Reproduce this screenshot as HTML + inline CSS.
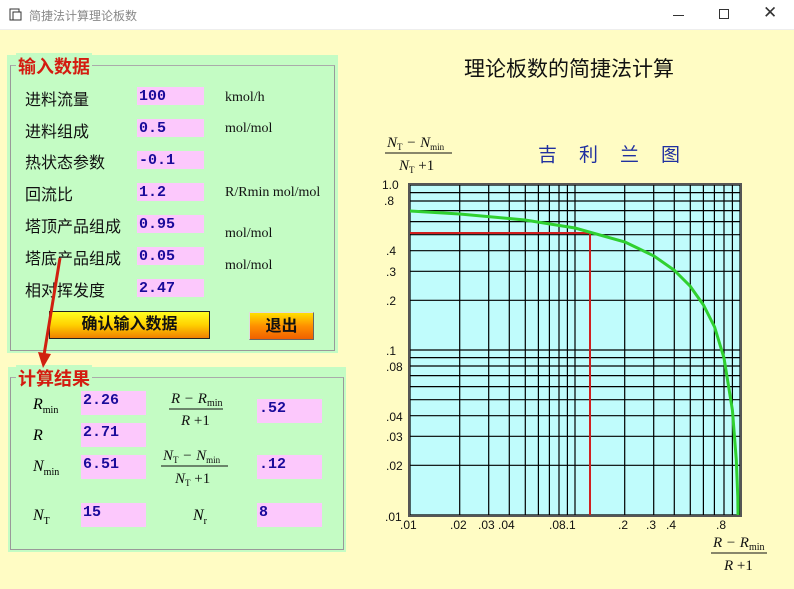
<!DOCTYPE html>
<html><head><meta charset="utf-8"><style>
*{margin:0;padding:0;box-sizing:border-box}
body{width:794px;height:589px;overflow:hidden;background:#fffcc4;font-family:"Liberation Serif","Noto Serif CJK SC",serif;position:relative}
.a{position:absolute}
.tb{left:0;top:0;width:794px;height:30px;background:#fff;border-bottom:1px solid #eee}
.grp{background:#c4fcc4}
.frame{border:1px solid #999;border-top-color:#aaa}
.lab{font-family:"Liberation Sans","Noto Sans CJK SC",sans-serif;font-size:16px;color:#111}
.in{background:#fcc8fc;font-family:"Liberation Mono","Noto Sans CJK SC",monospace;font-weight:bold;color:#1a0a9a;font-size:15px;padding-left:2px;line-height:19px}
.u{font-size:14px;color:#111}
.leg{font-family:"Liberation Sans","Noto Sans CJK SC",sans-serif;font-weight:bold;color:#d41c10;font-size:18px;background:#c4fcc4;padding:0 2px}
.btn{font-family:"Liberation Sans","Noto Sans CJK SC",sans-serif;font-weight:bold;font-size:16px;text-align:center;color:#111}
.it{font-style:italic;font-size:16px}
</style></head><body>
<div class="a tb"></div>
<svg class="a" style="left:9px;top:8px" width="14" height="14"><rect x="1" y="1" width="9" height="11" fill="none" stroke="#333"/><rect x="4" y="4" width="8" height="8" fill="#fff" stroke="#333"/></svg>
<div class="a" style="left:29px;top:7px;font-family:'Liberation Sans','Noto Sans CJK SC',sans-serif;font-size:12px;color:#888">简捷法计算理论板数</div>
<div class="a" style="left:673px;top:15px;width:11px;height:1px;background:#333"></div>
<div class="a" style="left:719px;top:9px;width:10px;height:10px;border:1px solid #333"></div>
<div class="a" style="left:763px;top:3px;font-family:'Liberation Sans',sans-serif;font-size:17px;color:#333">✕</div>

<div class="a grp" style="left:7px;top:55px;width:331px;height:298px"></div>
<div class="a frame" style="left:10px;top:65px;width:325px;height:286px"></div>
<div class="a leg" style="left:16px;top:53px">输入数据</div>

<div class="a lab" style="left:25px;top:86px">进料流量</div>
<div class="a lab" style="left:25px;top:118px">进料组成</div>
<div class="a lab" style="left:25px;top:149px">热状态参数</div>
<div class="a lab" style="left:25px;top:181px">回流比</div>
<div class="a lab" style="left:25px;top:213px">塔顶产品组成</div>
<div class="a lab" style="left:25px;top:245px">塔底产品组成</div>
<div class="a lab" style="left:25px;top:277px">相对挥发度</div>
<div class="a in" style="left:137px;top:87px;width:67px;height:18px">100</div>
<div class="a in" style="left:137px;top:119px;width:67px;height:18px">0.5</div>
<div class="a in" style="left:137px;top:151px;width:67px;height:18px">-0.1</div>
<div class="a in" style="left:137px;top:183px;width:67px;height:18px">1.2</div>
<div class="a in" style="left:137px;top:215px;width:67px;height:18px">0.95</div>
<div class="a in" style="left:137px;top:247px;width:67px;height:18px">0.05</div>
<div class="a in" style="left:137px;top:279px;width:67px;height:18px">2.47</div>
<div class="a u" style="left:225px;top:90px">kmol/h</div>
<div class="a u" style="left:225px;top:121px">mol/mol</div>
<div class="a u" style="left:225px;top:185px">R/Rmin mol/mol</div>
<div class="a u" style="left:225px;top:226px">mol/mol</div>
<div class="a u" style="left:225px;top:258px">mol/mol</div>
<div class="a btn" style="left:49px;top:311px;width:161px;height:28px;border:1px solid #222;background:linear-gradient(#ffff20,#ffd000 50%,#f08000);line-height:26px">确认输入数据</div>
<div class="a btn" style="left:249px;top:312px;width:65px;height:28px;border:1px solid #ddd;border-right-color:#666;border-bottom-color:#666;background:linear-gradient(#ffe000,#ff9000 50%,#f06000);line-height:28px">退出</div>

<div class="a grp" style="left:8px;top:367px;width:338px;height:185px"></div>
<div class="a frame" style="left:10px;top:377px;width:334px;height:173px"></div>
<div class="a leg" style="left:16px;top:365px">计算结果</div>

<div class="a it" style="left:33px;top:396px">R<sub style="font-size:10px;font-style:normal">min</sub></div>
<div class="a it" style="left:33px;top:427px">R</div>
<div class="a it" style="left:33px;top:458px">N<sub style="font-size:10px;font-style:normal">min</sub></div>
<div class="a it" style="left:33px;top:507px">N<sub style="font-size:10px;font-style:normal">T</sub></div>
<div class="a it" style="left:193px;top:507px">N<sub style="font-size:10px;font-style:normal">r</sub></div>
<div class="a in" style="left:81px;top:391px;width:65px;height:24px">2.26</div>
<div class="a in" style="left:81px;top:423px;width:65px;height:24px">2.71</div>
<div class="a in" style="left:81px;top:455px;width:65px;height:24px">6.51</div>
<div class="a in" style="left:81px;top:503px;width:65px;height:24px">15</div>
<div class="a in" style="left:257px;top:399px;width:65px;height:24px;line-height:20px">.52</div>
<div class="a in" style="left:257px;top:455px;width:65px;height:24px;line-height:20px">.12</div>
<div class="a in" style="left:257px;top:503px;width:65px;height:24px">8</div>

<svg class="a" style="left:0;top:0" width="794" height="589" font-family="Liberation Serif,serif">
<g font-size="15" font-style="italic" fill="#111">
<text x="171" y="403">R − R<tspan font-size="10" font-style="normal" dy="3">min</tspan></text>
<line x1="169" y1="409" x2="223" y2="409" stroke="#111"/>
<text x="181" y="425">R <tspan font-style="normal">+1</tspan></text>
<text x="163" y="460">N<tspan font-size="9" font-style="normal" dy="3">T</tspan><tspan dy="-3"> − N</tspan><tspan font-size="9" font-style="normal" dy="3">min</tspan></text>
<line x1="161" y1="466" x2="228" y2="466" stroke="#111"/>
<text x="175" y="483">N<tspan font-size="9" font-style="normal" dy="3">T</tspan><tspan dy="-3" font-style="normal"> +1</tspan></text>
<text x="387" y="147">N<tspan font-size="9" font-style="normal" dy="3">T</tspan><tspan dy="-3"> − N</tspan><tspan font-size="9" font-style="normal" dy="3">min</tspan></text>
<line x1="385" y1="153" x2="452" y2="153" stroke="#111"/>
<text x="399" y="170">N<tspan font-size="9" font-style="normal" dy="3">T</tspan><tspan dy="-3" font-style="normal"> +1</tspan></text>
<text x="713" y="547">R − R<tspan font-size="10" font-style="normal" dy="3">min</tspan></text>
<line x1="711" y1="553" x2="767" y2="553" stroke="#111"/>
<text x="724" y="570">R <tspan font-style="normal">+1</tspan></text>
</g>
<path d="M60 258 L44 355" stroke="#d02010" stroke-width="3"/>
<path d="M38 352 L43 368 L51 354 Z" fill="#d02010"/>
<rect x="410" y="185" width="330" height="330" fill="#c0fcfc"/>
<g stroke="#000" stroke-width="1.2">
<path d="M410 185V515M459.7 185V515M488.7 185V515M509.3 185V515M525.3 185V515M538.4 185V515M549.4 185V515M559 185V515M567.4 185V515M575 185V515M624.7 185V515M653.7 185V515M674.3 185V515M690.3 185V515M703.4 185V515M714.4 185V515M724 185V515M732.4 185V515M740 185V515"/>
<path d="M410 515H740M410 465.3H740M410 436.3H740M410 415.7H740M410 399.7H740M410 386.6H740M410 375.6H740M410 366H740M410 357.6H740M410 350H740M410 300.3H740M410 271.3H740M410 250.7H740M410 234.7H740M410 221.6H740M410 210.6H740M410 201H740M410 192.6H740M410 185H740"/>
</g>
<rect x="409" y="184" width="332" height="332" fill="none" stroke="#555" stroke-width="2"/>
<path d="M410 233H590V515" fill="none" stroke="#d02020" stroke-width="2"/>
<path d="M410 211L459.7 214L525 220L575 228L625 242L654 256L674 270L690 286L703.5 305L714.6 327L724 358L732.4 410L736.3 460L737.8 497L738 515" fill="none" stroke="#30d030" stroke-width="3"/>
<g font-family="Liberation Sans,sans-serif" font-size="12" fill="#111">
<text x="382" y="189">1.0</text><text x="384" y="205">.8</text><text x="386" y="255">.4</text><text x="386" y="276">.3</text><text x="386" y="305">.2</text><text x="386" y="355">.1</text><text x="386" y="371">.08</text><text x="386" y="421">.04</text><text x="386" y="441">.03</text><text x="386" y="470">.02</text><text x="385" y="521">.01</text>
<text x="400" y="529">.01</text><text x="450" y="529">.02</text><text x="478" y="529">.03</text><text x="498" y="529">.04</text><text x="549" y="529">.08.1</text><text x="618" y="529">.2</text><text x="646" y="529">.3</text><text x="666" y="529">.4</text><text x="716" y="529">.8</text>
</g>
<text x="569" y="76" text-anchor="middle" font-family="Liberation Sans,Noto Sans CJK SC,sans-serif" font-size="21" fill="#111">理论板数的简捷法计算</text>
<text x="538" y="161" font-family="Liberation Sans,Noto Sans CJK SC,sans-serif" font-size="19" fill="#2030a0" letter-spacing="22">吉利兰图</text>
</svg>
</body></html>
